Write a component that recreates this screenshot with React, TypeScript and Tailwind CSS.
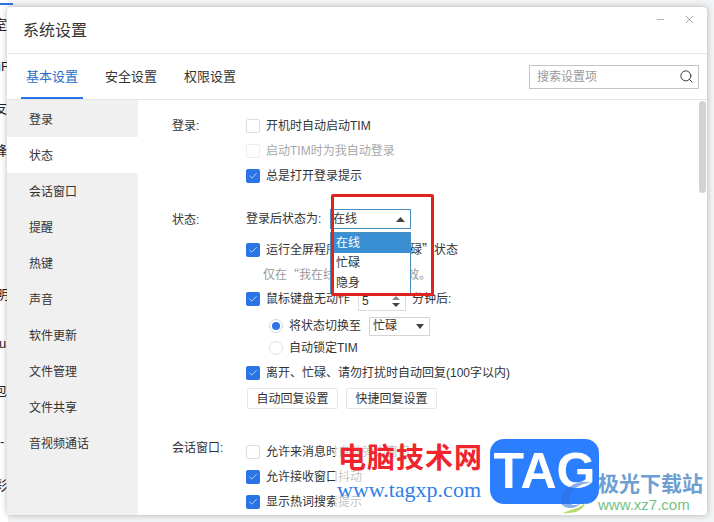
import { Check, Search, X, Minus } from "lucide-react";
import type { ReactNode } from "react";

const font = "font-['Liberation_Sans','Noto_Sans_CJK_SC',sans-serif]";

const navItems = ["登录", "状态", "会话窗口", "提醒", "热键", "声音", "软件更新", "文件管理", "文件共享", "音视频通话"];

function Box({ checked, disabled }: { checked?: boolean; disabled?: boolean }) {
  if (checked) {
    return (
      <span className="flex h-[14px] w-[14px] shrink-0 items-center justify-center rounded-[2px] bg-[#2b74e8]">
        <Check size={10} strokeWidth={1.6} className="text-white" />
      </span>
    );
  }
  return (
    <span className={`h-[14px] w-[14px] shrink-0 rounded-[2px] border ${disabled ? "border-[#eeeeee]" : "border-[#dddddd]"} bg-white`} />
  );
}

function CheckRow({ h, checked, disabled, children }: { h: string; checked?: boolean; disabled?: boolean; children: ReactNode }) {
  return (
    <div className={`flex items-center gap-[6px] ${h} ${disabled ? "text-[#a8a8a8]" : "text-[#333333]"}`}>
      <Box checked={checked} disabled={disabled} />
      <span className="whitespace-nowrap">{children}</span>
    </div>
  );
}

function Caret({ up }: { up?: boolean }) {
  return (
    <svg width={up ? 9 : 8} height="5" viewBox="0 0 10 6" preserveAspectRatio="none" className="shrink-0">
      <path d={up ? "M5 0 L10 6 L0 6 Z" : "M0 0 L10 0 L5 6 Z"} fill="#444444" />
    </svg>
  );
}

export default function App() {
  return (
    <div className={`relative h-[522px] w-[714px] overflow-hidden bg-[#f2f3f4] text-[12px] text-[#333333] ${font}`}>
      {/* app behind the dialog, only its edge shows */}
      <div className="absolute left-0 top-0 h-full w-[8px] bg-white text-[13px] text-[#222222]">
        <div className="absolute left-0 top-[3px] h-[2px] w-[13px] bg-[#2b74e8]" />
        <span className="absolute -left-[6px] top-[15px]">室</span>
        <span className="absolute -left-[2px] top-[57px]">iF</span>
        <span className="absolute -left-[6px] top-[99px]">友</span>
        <span className="absolute -left-[6px] top-[141px]">峰</span>
        <span className="absolute -left-[4px] top-[285px]">明</span>
        <span className="absolute -left-[1px] top-[334px]">u</span>
        <span className="absolute -left-[6px] top-[381px]">包</span>
        <span className="absolute left-0 top-[432px]">-</span>
        <span className="absolute -left-[6px] top-[476px]">彩</span>
      </div>

      {/* dialog */}
      <div className="absolute left-[7px] top-[7px] flex h-[508px] w-[700px] flex-col overflow-hidden rounded-[4px] bg-white shadow-[0_0_6px_rgba(0,0,0,0.28)]">
        <div className="flex h-[47px] shrink-0 items-start justify-between border-b border-[#e6e6e6] pl-[16px] pr-[11px]">
          <h1 className="mt-[12px] text-[16px] leading-[24px] font-normal text-[#333333]">系统设置</h1>
          <div className="mt-[6px] flex items-center gap-[17px] text-[#666666]">
            <Minus size={11} strokeWidth={1.1} />
            <X size={13} strokeWidth={1.1} />
          </div>
        </div>

        <div className="flex h-[46px] shrink-0 items-center justify-between border-b border-[#e6e6e6] pl-[14px] pr-[8px]">
          <div className="flex h-full items-end gap-[27px] text-[13px]">
            <span className="border-b-[2px] border-[#2b74e8] px-[5px] pb-[6px] leading-[28px] text-[#2b6cc4]">基本设置</span>
            <span className="-ml-[5px] pb-[8px] leading-[28px]">安全设置</span>
            <span className="pb-[8px] leading-[28px]">权限设置</span>
          </div>
          <div className="flex h-[24px] w-[170px] items-center justify-between border border-[#c4c4c4] pl-[7px] pr-[4px] text-[#999999]">
            <span>搜索设置项</span>
            <Search size={15} strokeWidth={1.4} className="text-[#222222]" />
          </div>
        </div>

        <div className="flex min-h-0 flex-1">
          <nav className="flex w-[131px] shrink-0 flex-col bg-[#f0f0f0] pt-px">
            {navItems.map((item, i) => (
              <div key={item} className={`flex h-[36px] shrink-0 items-center pl-[22px] pt-[2px] ${i === 1 ? "bg-white" : ""}`}>
                {item}
              </div>
            ))}
          </nav>

          <div className="relative min-w-0 flex-1 overflow-hidden pl-[34px] pt-[13px]">
            <section className="flex">
              <div className="h-[25px] w-[74px] shrink-0 pt-[1px] leading-[25px]">登录:</div>
              <div className="flex flex-col">
                <CheckRow h="h-[25px]">开机时自动启动TIM</CheckRow>
                <CheckRow h="h-[25px]" disabled>启动TIM时为我自动登录</CheckRow>
                <CheckRow h="h-[25px]" checked>总是打开登录提示</CheckRow>
              </div>
            </section>

            <section className="mt-[21px] flex">
              <div className="h-[20px] w-[74px] shrink-0 pt-[1px] leading-[20px]">状态:</div>
              <div className="flex flex-col">
                <div className="flex h-[20px] items-center">
                  <span className="w-[84px] shrink-0 whitespace-nowrap">登录后状态为:</span>
                  <div className="flex h-[20px] w-[81px] items-center justify-between border border-[#4a8fc0] pl-[2px] pr-[5px]">
                    <span>在线</span>
                    <Caret up />
                  </div>
                </div>
                <div className="mt-[8px]">
                  <CheckRow h="h-[25px]" checked>
                    运行全屏程序时切换为<span className="font-['Noto_Sans_CJK_SC',sans-serif]">“</span>忙碌<span className="font-['Noto_Sans_CJK_SC',sans-serif]">”</span>状态
                  </CheckRow>
                </div>
                <div className="h-[25px] pl-[17px] leading-[24px] whitespace-nowrap text-[#999999]">
                  仅在<span className="font-['Noto_Sans_CJK_SC',sans-serif]">“</span>我在线上<span className="font-['Noto_Sans_CJK_SC',sans-serif]">”</span>状态时生效。
                </div>
                <div className="flex h-[24px] items-center gap-[6px]">
                  <Box checked />
                  <span className="whitespace-nowrap">鼠标键盘无动作</span>
                  <div className="ml-[2px] mt-[4px] flex h-[20px] w-[48px] items-center justify-between self-start border border-[#dddddd] pl-[3px] pr-[5px]">
                    <span>5</span>
                    <span className="flex flex-col gap-[3px]">
                      <svg width="8" height="4" viewBox="0 0 8 4"><path d="M4 0 L8 4 L0 4 Z" fill="#888888" /></svg>
                      <svg width="8" height="4" viewBox="0 0 8 4"><path d="M0 0 L8 0 L4 4 Z" fill="#444444" /></svg>
                    </span>
                  </div>
                  <span className="whitespace-nowrap">分钟后:</span>
                </div>
                <div className="mt-[3px] flex h-[24px] items-center pl-[23px]">
                  <span className="flex h-[14px] w-[14px] shrink-0 items-center justify-center rounded-full border border-[#cfd8e6] bg-white">
                    <span className="h-[8px] w-[8px] rounded-full bg-[#2b74e8]" />
                  </span>
                  <span className="ml-[6px] w-[80px] shrink-0 whitespace-nowrap">将状态切换至</span>
                  <div className="flex h-[19px] w-[61px] items-center justify-between border border-[#d4d4d4] pl-[3px] pr-[5px]">
                    <span>忙碌</span>
                    <Caret />
                  </div>
                </div>
                <div className="-mt-px flex h-[21px] items-center pl-[23px]">
                  <span className="h-[14px] w-[14px] shrink-0 rounded-full border border-[#e2e2e2] bg-white" />
                  <span className="ml-[6px] whitespace-nowrap">自动锁定TIM</span>
                </div>
                <div className="mt-[2px]">
                  <CheckRow h="h-[26px]" checked>离开、忙碌、请勿打扰时自动回复(100字以内)</CheckRow>
                </div>
                <div className="mt-[2px] flex gap-[8px] pl-px">
                  <button className="h-[21px] w-[91px] rounded-[2px] border border-[#e6e6e6] bg-white">自动回复设置</button>
                  <button className="h-[21px] w-[91px] rounded-[2px] border border-[#e6e6e6] bg-white">快捷回复设置</button>
                </div>
              </div>
            </section>

            <section className="mt-[29px] flex">
              <div className="h-[20px] w-[74px] shrink-0 leading-[20px]">会话窗口:</div>
              <div className="flex flex-col">
                <CheckRow h="h-[27px]">允许来消息时自动弹出窗口</CheckRow>
                <CheckRow h="h-[24px]" checked>允许接收窗口抖动</CheckRow>
                <CheckRow h="h-[25px]" checked>显示热词搜索提示</CheckRow>
              </div>
            </section>

            <div className="absolute right-[1px] top-[1px] h-[92px] w-[7px] rounded-full bg-[#d2d2d2]" />
          </div>
        </div>
      </div>

      {/* open select list */}
      <div className="absolute left-[330px] top-[232px] flex h-[62px] w-[81px] flex-col border border-[#4a8fc0] bg-white">
        <div className="flex h-[20px] items-center bg-[#3a8fd3] pl-[5px] text-white">在线</div>
        <div className="flex h-[20px] items-center pl-[5px]">忙碌</div>
        <div className="flex h-[20px] items-center pl-[5px]">隐身</div>
      </div>

      {/* annotation box */}
      <div className="absolute left-[331px] top-[194px] h-[102px] w-[103px] rounded-[2px] border-[3px] border-[#e0231c]" />

      {/* watermark */}
      <div className="absolute left-[335px] top-[440px] h-[75px] w-[155px] bg-white/70" />
      <div className="absolute left-[338px] top-[440px] text-[28px] leading-[38px] font-bold tracking-[1px] whitespace-nowrap text-[#f0242c]">电脑技术网</div>
      <div className="absolute left-[337px] top-[477px] font-['Liberation_Serif',serif] text-[22px] leading-[26px] whitespace-nowrap text-[#2f7fe8]">www.tagxp.com</div>
      <div className="absolute left-[490px] top-[439px] flex h-[65px] w-[109px] items-center justify-center rounded-[14px] bg-[#2b7fff] text-[50px] leading-[65px] font-bold text-white">TAG</div>
      <svg width="42" height="42" viewBox="0 0 42 42" className="absolute left-[555px] top-[473px]">
        <path d="M6 26 C10 12 26 6 36 10 C26 10 16 16 14 26 C13 32 20 34 26 30 C20 38 4 36 6 26 Z" fill="#2a6fd8" fillOpacity="0.55" />
        <path d="M8 40 C16 36 24 36 30 30 C28 38 18 41 8 40 Z" fill="#b7d86a" />
      </svg>
      <div className="absolute left-[598px] top-[470px] text-[21px] leading-[28px] font-bold whitespace-nowrap text-[#6e9fd2]">极光下载站</div>
      <div className="absolute left-[598px] top-[496px] text-[15px] leading-[18px] whitespace-nowrap text-[#74c285]">www.xz7.com</div>
    </div>
  );
}
